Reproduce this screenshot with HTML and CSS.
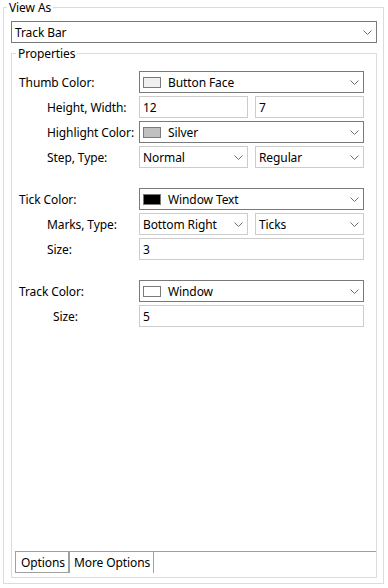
FILE: index.html
```html
<!DOCTYPE html>
<html lang="en">
<head>
    <meta charset="UTF-8">
    <meta name="viewport" content="width=device-width, initial-scale=1.0">
    <title>View As - Track Bar</title>
    <link rel="stylesheet" href="styles.css">
</head>
<body>
    <fieldset class="group outer">
        <legend>View As</legend>
        <div class="outer-body">
            <div class="combo dark">
                <span class="value">Track Bar</span>
                <svg class="chev" width="9" height="5" viewBox="0 0 9 5"><polyline points="0.5,0.5 4.5,4.5 8.5,0.5"/></svg>
            </div>

            <fieldset class="group props">
                <legend>Properties</legend>
                <div class="props-body">
                    <!-- Thumb -->
                    <div class="section">
                        <label>Thumb Color:</label>
                        <div class="combo dark span">
                            <span class="swatch face"></span>
                            <span class="value">Button Face</span>
                            <svg class="chev" width="9" height="5" viewBox="0 0 9 5"><polyline points="0.5,0.5 4.5,4.5 8.5,0.5"/></svg>
                        </div>

                        <label class="sub">Height, Width:</label>
                        <div class="field"><span class="value">12</span></div>
                        <div class="field"><span class="value">7</span></div>

                        <label class="sub">Highlight Color:</label>
                        <div class="combo dark span">
                            <span class="swatch silver"></span>
                            <span class="value">Silver</span>
                            <svg class="chev" width="9" height="5" viewBox="0 0 9 5"><polyline points="0.5,0.5 4.5,4.5 8.5,0.5"/></svg>
                        </div>

                        <label class="sub">Step, Type:</label>
                        <div class="combo">
                            <span class="value">Normal</span>
                            <svg class="chev" width="9" height="5" viewBox="0 0 9 5"><polyline points="0.5,0.5 4.5,4.5 8.5,0.5"/></svg>
                        </div>
                        <div class="combo">
                            <span class="value">Regular</span>
                            <svg class="chev" width="9" height="5" viewBox="0 0 9 5"><polyline points="0.5,0.5 4.5,4.5 8.5,0.5"/></svg>
                        </div>
                    </div>

                    <!-- Tick -->
                    <div class="section">
                        <label>Tick Color:</label>
                        <div class="combo dark span">
                            <span class="swatch text"></span>
                            <span class="value">Window Text</span>
                            <svg class="chev" width="9" height="5" viewBox="0 0 9 5"><polyline points="0.5,0.5 4.5,4.5 8.5,0.5"/></svg>
                        </div>

                        <label class="sub">Marks, Type:</label>
                        <div class="combo">
                            <span class="value">Bottom Right</span>
                            <svg class="chev" width="9" height="5" viewBox="0 0 9 5"><polyline points="0.5,0.5 4.5,4.5 8.5,0.5"/></svg>
                        </div>
                        <div class="combo">
                            <span class="value">Ticks</span>
                            <svg class="chev" width="9" height="5" viewBox="0 0 9 5"><polyline points="0.5,0.5 4.5,4.5 8.5,0.5"/></svg>
                        </div>

                        <label class="sub">Size:</label>
                        <div class="field span"><span class="value">3</span></div>
                    </div>

                    <!-- Track -->
                    <div class="section">
                        <label>Track Color:</label>
                        <div class="combo dark span">
                            <span class="swatch window"></span>
                            <span class="value">Window</span>
                            <svg class="chev" width="9" height="5" viewBox="0 0 9 5"><polyline points="0.5,0.5 4.5,4.5 8.5,0.5"/></svg>
                        </div>

                        <label class="sub wide">Size:</label>
                        <div class="field span"><span class="value">5</span></div>
                    </div>

                    <div class="tabs">
                        <div class="tab first">Options</div>
                        <div class="tab current">More Options</div>
                    </div>
                </div>
            </fieldset>
        </div>
    </fieldset>
</body>
</html>
```

FILE: styles.css
```css
html, body {
    margin: 0;
    background: #fff;
}

body {
    font-family: 'Noto Sans', 'Liberation Sans', sans-serif;
    font-size: 12px;
    letter-spacing: -0.1px;
    color: #000;
    width: 388px;
    height: 588px;
    padding: 0 4px 2px 3px;
    box-sizing: border-box;
}

/* Group boxes */
.group {
    margin: 0;
    padding: 0;
    border: 1px solid #dcdcdc;
    min-width: 0;
}

.group legend {
    margin-left: 3px;
    padding: 0 2px;
    line-height: 15px;
    height: 15px;
}

.outer-body {
    padding: 6px 6px 5px 7px;
}

.props {
    margin-top: 3px;
}

.props legend {
    margin-left: 4px;
}

.props-body {
    padding: 10px 12px 4px 7px;
}

/* Form grid */
.section {
    display: grid;
    grid-template-columns: 113px 109px 109px;
    grid-auto-rows: 22px;
    column-gap: 7px;
    row-gap: 3px;
}

.section + .section {
    margin-top: 20px;
}

.section label {
    display: flex;
    align-items: center;
    grid-column: 1;
    white-space: nowrap;
}

.section label.sub {
    padding-left: 28px;
}

.section label.wide {
    padding-left: 34px;
}

.span {
    grid-column: 2 / 4;
}

/* Inputs */
.combo,
.field {
    display: flex;
    align-items: center;
    height: 22px;
    box-sizing: border-box;
    border: 1px solid #cccccc;
    background: #fff;
    padding-left: 3px;
    white-space: nowrap;
}

.combo.dark {
    border-color: #7a7a7a;
}

.chev {
    margin-left: auto;
    margin-right: 4px;
    fill: none;
    stroke: #6d6d6d;
    stroke-width: 1;
}

.swatch {
    width: 18px;
    height: 11px;
    box-sizing: border-box;
    border: 1px solid #7a7a7a;
    margin-right: 7px;
    flex: none;
}

.swatch.face { background: #f0f0f0; }
.swatch.silver { background: #c0c0c0; }
.swatch.text { background: #000; }
.swatch.window { background: #fff; }

/* Tabs at the bottom */
.tabs {
    display: flex;
    margin: 224px -12px 0 -4px;
    border-top: 1px solid #a0a0a0;
    height: 21px;
}

.tab {
    display: flex;
    align-items: center;
    box-sizing: border-box;
    height: 21px;
    border-left: 1px solid #a0a0a0;
    border-right: 1px solid #a0a0a0;
}

.tab.first {
    width: 54px;
    padding-left: 5px;
    border-bottom: 1px solid #a0a0a0;
}

.tab.current {
    width: 85px;
    padding-left: 4px;
}
```
